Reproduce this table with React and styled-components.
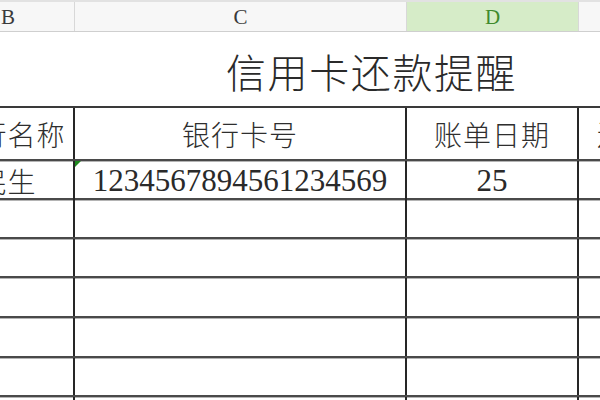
import styled, { createGlobalStyle } from 'styled-components';

const GlobalStyle = createGlobalStyle`
  html, body {
    margin: 0;
    padding: 0;
    background: #ffffff;
    overflow: hidden;
  }
`;

const COLS = '133px 332px 172px 152px';

const Sheet = styled.div`
  width: 600px;
  height: 400px;
  overflow: hidden;
  background: #fff;
  font-family: "Noto Sans CJK SC", "Noto Sans", sans-serif;
  color: #2e2e2e;
`;

const Inner = styled.div`
  margin-left: -58px;
  width: 800px;
`;

const LetterRow = styled.div`
  display: grid;
  grid-template-columns: ${COLS};
  height: 29px;
  border-top: 2px solid #e2e2e2;
  border-bottom: 1px solid #cfcfcf;
  background: #f7f7f7;
`;

const LetterCell = styled.div`
  display: flex;
  align-items: center;
  justify-content: center;
  border-right: 1px solid #d8d8d8;
  background: ${({ $active }) => ($active ? '#d6ecc8' : 'transparent')};
  color: ${({ $active }) => ($active ? '#3f8a2c' : '#3a3a3a')};
  font-family: "Liberation Serif", serif;
  font-size: 21px;
  padding-top: 1px;
`;

const TitleRow = styled.div`
  display: flex;
  align-items: center;
  height: 74px;
  padding-left: 284px;
`;

const Title = styled.h1`
  margin: 0;
  font-size: 40px;
  font-weight: 300;
  letter-spacing: 1.6px;
  color: #2a2a2a;
  padding-top: 4px;
`;

const Table = styled.div`
  border-top: 2px solid #3a3a3a;
`;

const Row = styled.div`
  display: grid;
  grid-template-columns: ${COLS};
  height: ${({ $h }) => $h}px;
  border-bottom: 2px solid #4a4a4a;
  box-shadow: 0 1px 0 #b4b4b4;
`;

const Cell = styled.div`
  position: relative;
  display: flex;
  align-items: center;
  justify-content: center;
  white-space: nowrap;
  border-right: ${({ $last }) => ($last ? 'none' : '2px solid #262626')};
  font-size: 28px;
  font-weight: 300;
  letter-spacing: ${({ $head }) => ($head ? '1px' : '0')};
  color: #2e2e2e;
`;

const Digits = styled.span`
  font-family: "Liberation Serif", serif;
  font-size: 31px;
  color: #2a2a2a;
`;

const CommentMark = styled.span`
  position: absolute;
  left: 0;
  top: 0;
  width: 0;
  height: 0;
  border-top: 6px solid #1f8a1f;
  border-right: 6px solid transparent;
`;

const letters = ['B', 'C', 'D', 'E'];
const heads = ['银行名称', '银行卡号', '账单日期', '还款日期'];
const rowHeights = [37, 37, 38, 38, 37, 37];

export default function App() {
  return (
    <Sheet>
      <GlobalStyle />
      <Inner>
        <LetterRow>
          {letters.map((l) => (
            <LetterCell key={l} $active={l === 'D'}>
              {l}
            </LetterCell>
          ))}
        </LetterRow>
        <TitleRow>
          <Title>信用卡还款提醒</Title>
        </TitleRow>
        <Table>
          <Row $h={51}>
            {heads.map((h, i) => (
              <Cell key={h} $head $last={i === 3}>
                {h}
              </Cell>
            ))}
          </Row>
          <Row $h={37}>
            <Cell>民生</Cell>
            <Cell>
              <CommentMark />
              <Digits>1234567894561234569</Digits>
            </Cell>
            <Cell>
              <Digits>25</Digits>
            </Cell>
            <Cell $last />
          </Row>
          {rowHeights.map((h, i) => (
            <Row key={i} $h={h}>
              <Cell />
              <Cell />
              <Cell />
              <Cell $last />
            </Row>
          ))}
        </Table>
      </Inner>
    </Sheet>
  );
}
